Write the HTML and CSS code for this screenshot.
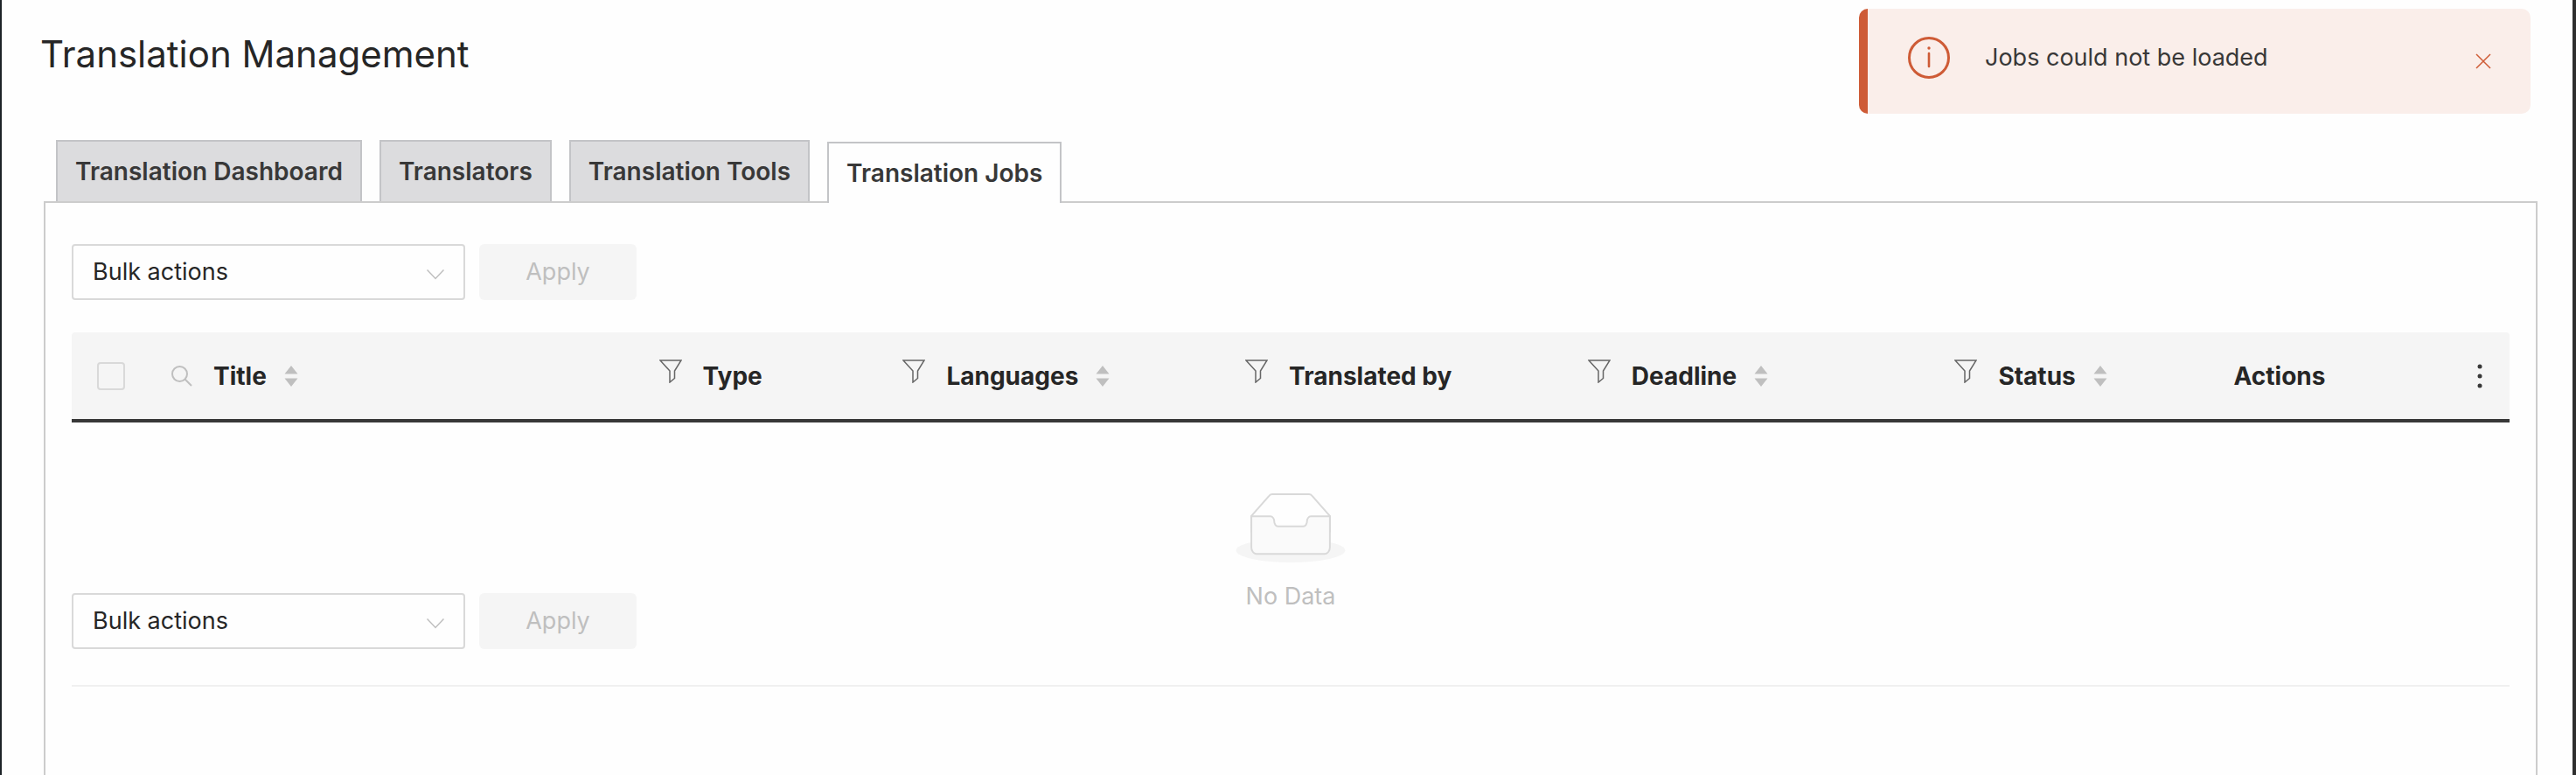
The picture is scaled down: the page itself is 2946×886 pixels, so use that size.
FILE: index.html
```html
<!DOCTYPE html>
<html lang="en">
<head>
    <meta charset="UTF-8">
    <meta name="viewport" content="width=device-width, initial-scale=1.0">
    <title>Translation Management</title>
    <link rel="stylesheet" href="styles.css">
</head>
<body>
    <!-- shared icons -->
    <svg class="sprite" aria-hidden="true">
        <symbol id="icon-filter" viewBox="0 0 26 27">
            <path d="M1 1h24l-7.500 12v8.500l-5.500 4.500v-13z" fill="none" stroke="currentColor" stroke-width="1.500"/>
        </symbol>
        <symbol id="icon-sort" viewBox="0 0 16 24">
            <path d="M8 0l7.500 9.500h-15zM8 24l7.500-9.500h-15z" fill="currentColor"/>
        </symbol>
        <symbol id="icon-down" viewBox="0 0 20 12">
            <path d="M.5 .5l9.500 10l9.500-10" fill="none" stroke="currentColor" stroke-width="1.500"/>
        </symbol>
    </svg>

    <div class="page">
        <h1>Translation Management</h1>

        <nav class="tabs">
            <a class="tab" href="#dashboard">Translation Dashboard</a>
            <a class="tab" href="#translators">Translators</a>
            <a class="tab" href="#tools">Translation Tools</a>
            <a class="tab tab-active" href="#jobs">Translation Jobs</a>
        </nav>

        <main class="panel">
            <form class="bulk">
                <div class="select">
                    <select aria-label="Select bulk action">
                        <option>Bulk actions</option>
                    </select>
                    <svg class="select-arrow"><use href="#icon-down"/></svg>
                </div>
                <button class="apply" type="button" disabled>Apply</button>
            </form>

            <div class="jobs">
                <table>
                    <colgroup>
                        <col class="col-check">
                        <col class="col-title">
                        <col class="col-type">
                        <col class="col-languages">
                        <col class="col-translator">
                        <col class="col-deadline">
                        <col class="col-status">
                        <col>
                    </colgroup>
                    <thead>
                        <tr>
                            <th class="cell-check"><input type="checkbox" aria-label="Select all jobs"></th>
                            <th>
                                <div class="head">
                                    <svg class="search" viewBox="0 0 24 24"><circle cx="9.500" cy="9.500" r="8.500"/><path d="M15.500 15.500L23 23"/></svg>
                                    <span>Title</span>
                                    <svg class="sort"><use href="#icon-sort"/></svg>
                                </div>
                            </th>
                            <th>
                                <div class="head">
                                    <svg class="filter"><use href="#icon-filter"/></svg>
                                    <span>Type</span>
                                </div>
                            </th>
                            <th>
                                <div class="head">
                                    <svg class="filter"><use href="#icon-filter"/></svg>
                                    <span>Languages</span>
                                    <svg class="sort"><use href="#icon-sort"/></svg>
                                </div>
                            </th>
                            <th>
                                <div class="head">
                                    <svg class="filter"><use href="#icon-filter"/></svg>
                                    <span>Translated by</span>
                                </div>
                            </th>
                            <th>
                                <div class="head">
                                    <svg class="filter"><use href="#icon-filter"/></svg>
                                    <span>Deadline</span>
                                    <svg class="sort"><use href="#icon-sort"/></svg>
                                </div>
                            </th>
                            <th>
                                <div class="head">
                                    <svg class="filter"><use href="#icon-filter"/></svg>
                                    <span>Status</span>
                                    <svg class="sort"><use href="#icon-sort"/></svg>
                                </div>
                            </th>
                            <th>
                                <div class="head">
                                    <span>Actions</span>
                                    <button class="more" type="button" aria-label="More">
                                        <svg width="6" height="28" viewBox="0 0 6 28" fill="currentColor"><circle cx="3" cy="3" r="2.500"/><circle cx="3" cy="14" r="2.500"/><circle cx="3" cy="25" r="2.500"/></svg>
                                    </button>
                                </div>
                            </th>
                        </tr>
                    </thead>
                    <tbody>
                        <tr>
                            <td class="empty" colspan="8">
                                <svg class="empty-icon" viewBox="0 0 64 41">
                                    <g transform="translate(0 1)" fill="none" fill-rule="evenodd">
                                        <ellipse fill="#f5f5f5" cx="32" cy="33" rx="32" ry="7"/>
                                        <g fill-rule="nonzero" stroke="#d9d9d9">
                                            <path fill="#fefefe" d="M55 12.760L44.854 1.258C44.367.474 43.656 0 42.907 0H21.093c-.749 0-1.460.474-1.947 1.257L9 12.761V22h46v-9.240z"/>
                                            <path fill="#fafafa" d="M41.613 15.931c0-1.605.994-2.930 2.227-2.931H55v18.137C55 33.260 53.680 35 52.050 35h-40.100C10.320 35 9 33.259 9 31.137V13h11.160c1.233 0 2.227 1.323 2.227 2.928v.022c0 1.605 1.005 2.901 2.237 2.901h14.752c1.232 0 2.237-1.308 2.237-2.913v-.007z"/>
                                        </g>
                                    </g>
                                </svg>
                                <p>No Data</p>
                            </td>
                        </tr>
                    </tbody>
                </table>

                <!-- sits on top of the empty table row -->
                <form class="bulk bulk-bottom">
                    <div class="select">
                        <select aria-label="Select bulk action">
                            <option>Bulk actions</option>
                        </select>
                        <svg class="select-arrow"><use href="#icon-down"/></svg>
                    </div>
                    <button class="apply" type="button" disabled>Apply</button>
                </form>
            </div>
        </main>
    </div>

    <div class="notice" role="alert">
        <svg class="notice-icon" viewBox="0 0 48 48">
            <circle cx="24" cy="24" r="22.500" fill="none" stroke="currentColor" stroke-width="3"/>
            <circle cx="24" cy="13" r="1.700" fill="currentColor"/>
            <path d="M24 19v15" stroke="currentColor" stroke-width="2.600" stroke-linecap="round"/>
        </svg>
        <p>Jobs could not be loaded</p>
        <button class="notice-close" type="button" aria-label="Close">
            <svg width="18" height="18" viewBox="0 0 18 18"><path d="M1 1l16 16M17 1L1 17" stroke="currentColor" stroke-width="1.500"/></svg>
        </button>
    </div>
</body>
</html>
```

FILE: styles.css
```css
* {
    box-sizing: border-box;
}
body {
    margin: 0;
    font-family: Inter, "Liberation Sans", sans-serif;
    font-size: 27px;
    line-height: 44px;
    color: #262626;
    background: #fefefe;
}
button, select, input {
    font: inherit;
    margin: 0;
}
p {
    margin: 0;
}
.sprite {
    display: none;
}

.page {
    min-height: 100vh;
    display: flex;
    flex-direction: column;
    padding: 32px 40px 0 48px;
    border-left: 2px solid #1d2327;
    border-right: 4px solid #2f2f2f;
}
h1 {
    margin: 0 0 68px -4px;
    font-size: 42px;
    line-height: 60px;
    font-weight: 400;
}

/* tabs */
.tabs {
    display: flex;
    align-items: flex-end;
    gap: 20px;
    padding-left: 14px;
}
.tab {
    height: 70px;
    padding: 12px 20px;
    border: 2px solid #c3c4c7;
    border-bottom: 0;
    background: #dcdcde;
    color: #383838;
    font-size: 28px;
    font-weight: 600;
    text-decoration: none;
}
.tab-active {
    position: relative;
    margin-bottom: -2px;
    background: #fefefe;
}

.panel {
    flex: 1;
    padding: 47px 30px 0;
    border: 2px solid #ccc;
    border-bottom: 0;
}

/* bulk actions */
.bulk {
    display: flex;
    gap: 16px;
}
.select {
    position: relative;
    width: 450px;
}
.select select {
    appearance: none;
    width: 100%;
    height: 64px;
    padding: 0 60px 0 22px;
    border: 2px solid #d9d9d9;
    border-radius: 4px;
    background: #fefefe;
    color: #262626;
}
.select-arrow {
    position: absolute;
    top: 29px;
    right: 24px;
    width: 20px;
    height: 12px;
    color: #bfbfbf;
    pointer-events: none;
}
.apply {
    width: 180px;
    height: 64px;
    border: 0;
    border-radius: 6px;
    background: #f5f5f5;
    color: #bfbfbf;
}

/* jobs table */
.jobs {
    position: relative;
    margin-top: 37px;
}
table {
    width: 100%;
    table-layout: fixed;
    border-collapse: separate;
    border-spacing: 0;
}
.col-check {
    width: 90px;
}
.col-title {
    width: 20%;
}
.col-type {
    width: 10%;
}
.col-languages, .col-translator {
    width: 14.05%;
}
.col-deadline {
    width: 15.05%;
}
.col-status {
    width: 11.45%;
}
th {
    height: 103px;
    padding: 0 0 0 24px;
    background: #f5f5f5;
    border-bottom: 4px solid #383838;
    font-size: 28px;
    font-weight: 700;
    text-align: left;
}
th:first-child {
    border-top-left-radius: 4px;
}
th:last-child {
    border-top-right-radius: 4px;
}
.cell-check {
    padding-left: 29px;
}
input[type="checkbox"] {
    appearance: none;
    display: block;
    width: 32px;
    height: 32px;
    border: 2px solid #d9d9d9;
    border-radius: 4px;
}
.head {
    display: flex;
    align-items: center;
}
.search {
    width: 24px;
    height: 24px;
    margin-right: 24px;
    fill: none;
    stroke: #bfbfbf;
    stroke-width: 2px;
}
.filter {
    width: 26px;
    height: 27px;
    margin: 0 24px 10px 0;
    color: #666;
}
.sort {
    width: 16px;
    height: 24px;
    margin-left: 20px;
    color: #bfbfbf;
}
.more {
    display: flex;
    margin-left: auto;
    padding: 8px 31px;
    border: 0;
    background: none;
    color: #383838;
}
.empty {
    height: 302px;
    padding: 80px 0 0;
    border-bottom: 2px solid #f0f0f0;
    vertical-align: top;
    text-align: center;
    color: #bfbfbf;
}
.empty-icon {
    display: block;
    width: 128px;
    height: 80px;
    margin: 0 auto 17px;
}
.bulk-bottom {
    position: absolute;
    left: 0;
    bottom: 43px;
}

/* error notice */
.notice {
    position: absolute;
    top: 10px;
    right: 52px;
    width: 768px;
    height: 120px;
    display: flex;
    align-items: flex-start;
    padding: 32px 36px 0 46px;
    border-left: 10px solid #ce5b36;
    border-radius: 10px;
    background: #faeeea;
    color: #383838;
}
.notice-icon {
    width: 48px;
    height: 48px;
    margin-right: 40px;
    color: #ce5b36;
}
.notice p {
    line-height: 48px;
}
.notice-close {
    display: flex;
    margin-left: auto;
    padding: 19px 9px;
    border: 0;
    background: none;
    color: #ce5b36;
}
```
